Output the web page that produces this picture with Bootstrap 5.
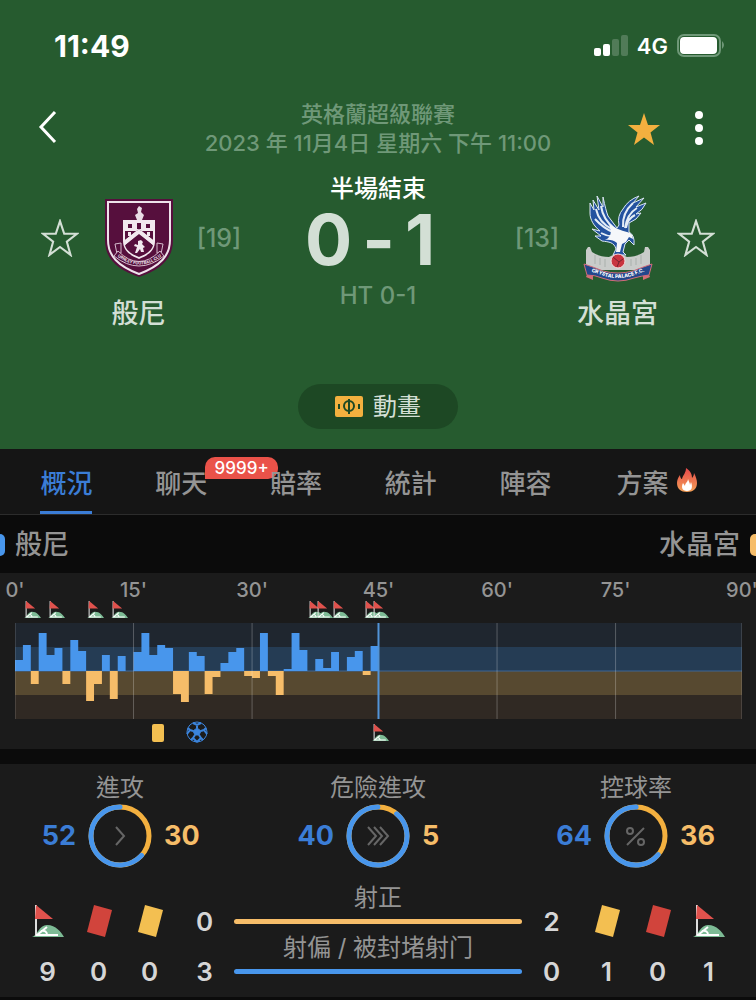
<!DOCTYPE html>
<html lang="zh-Hant">
<head>
<meta charset="utf-8">
<meta name="viewport" content="width=device-width, initial-scale=1">
<title>般尼 0 - 1 水晶宮</title>
<link href="https://cdn.jsdelivr.net/npm/bootstrap@5.3.0/dist/css/bootstrap.min.css" rel="stylesheet">
<style>
:root{--green:#265b2f;--blue:#4896ec;--blue-text:#3b7dd6;--gold:#f6bd69;--panel:#1b1b1b;--soft:#6f9878;--pale:#d3dfd5;--grey:#949494}
body{font-family:Inter,"Noto Sans CJK TC",sans-serif;background:#0b0b0b;color:var(--grey);overflow-x:hidden;font-weight:500}
svg{display:block}
.btn-plain{background:none;border:0;padding:0;color:inherit}
.match-head{background:var(--green);padding-bottom:20px}
.status-bar{height:100px;padding:29px 31px 0 54px;color:#fff}
.clock{font-size:30px;font-weight:700;line-height:34px}
.net{font-size:22px;font-weight:600;line-height:34px}
.top-row{padding:0 38px;height:72px}
.top-side{width:118px;padding-right:12px;gap:30px}
.league{font-size:22px;line-height:29px;color:var(--soft)}
.match-grid{display:grid;grid-template-columns:76px 81px 80px 1fr 80px 81px 76px;padding:0 22px}
.side-cell{height:88px;margin-top:22px;display:flex;align-items:center;justify-content:center}
.team-label{font-size:27px;line-height:34px;margin-top:15px;color:var(--pale);white-space:nowrap}
.rank{font-size:25px;color:var(--soft);padding-top:2px}
.phase{font-size:24px;line-height:34px;color:#fff}
.score{font-size:70px;line-height:68px;font-weight:700;color:var(--pale);gap:10px}
.half{font-size:24px;line-height:30px;margin-top:7px;color:var(--soft)}
.anim-btn{width:160px;height:45px;margin-top:53px;background:#1d4824;color:var(--pale);font-size:24px;border-radius:23px;gap:10px}
.tab-bar{background:#151515;border-bottom:1px solid #2c2c2c;height:66px;padding:0 24px 0 9px}
.tab-bar li{flex:10 1 0}
.tab-bar li:last-child{flex-grow:13}
.tab-bar a{color:var(--grey);text-decoration:none;font-size:26px;line-height:34px;height:65px;padding-top:18px;position:relative;z-index:1;display:inline-flex}
.tab-bar a.active{color:var(--blue-text);border-bottom:3px solid var(--blue-text)}
.chat-count{position:absolute;left:50px;top:8px;background:#ea5249;color:#fff;font-size:17px;line-height:22px;width:73px;text-align:center;border-radius:10px 10px 10px 0}
.team-row{height:58px;font-size:27px;overflow:hidden;padding-top:2px}
.team-row span{display:flex;align-items:center;gap:10px}
.home-name::before,.away-name::after{content:"";width:20px;height:22px;border-radius:5px;background:var(--blue);margin-left:-15px}
.away-name::after{background:var(--gold);margin:0 -14px 0 0}
.timeline{background:var(--panel);padding:0 14px 0 15px;height:176px;overflow:hidden}
.minutes{position:relative;height:28px;font-size:20px;line-height:34px}
.minutes span{position:absolute;transform:translateX(-50%)}
.events{position:relative;height:22px}
.events svg{position:absolute;top:0;margin-left:1px}
.below svg{top:5px}
.plot{width:100%;height:96px}
.stats{background:var(--panel);margin-top:15px;padding:10px 0 1px}
.rings{display:grid;grid-template-columns:20fr 23fr 20fr}
.ring-title{font-size:24px;line-height:28px;font-weight:400}
.ring-row{display:grid;grid-template-columns:1fr 64px 1fr;gap:12px;align-items:center;margin-top:2px;font-size:27px;font-weight:700;line-height:64px}
.txt-blue{color:var(--blue-text)}.txt-gold{color:var(--gold)}
.detail{margin-top:14px;padding:0 22px;font-size:26px;font-weight:600;color:#d6d6d6}
.counts{display:grid;grid-template-columns:repeat(3,51px) 59px;grid-auto-rows:50px;padding-top:14px;place-items:center}
.counts.away{grid-template-columns:59px repeat(3,51px)}
.bar-name{font-size:24px;line-height:32px;color:var(--grey);font-weight:400;white-space:nowrap}
.bar-line{height:5px;border-radius:3px;margin:5px 0 8px;background:var(--gold)}
.bar-line.home{background:var(--blue)}
</style>
<script src="https://cdn.jsdelivr.net/npm/bootstrap@5.3.0/dist/js/bootstrap.bundle.min.js"></script>
</head>
<body>
<svg width="0" height="0" class="position-absolute" aria-hidden="true">
  <symbol id="corner" viewBox="0 0 32 32">
    <path d="M0 32C5 31 7 20 15 20C24 20 29 27 32 32z" fill="#7dbb95"/>
    <path d="M4 0V31" stroke="#dedede" stroke-width="2"/>
    <path d="M4 0L21 14H3z" fill="#e0524d"/>
    <path d="M4 30H26M5 30L15 22M9 26C13 25 15 27 15 30" fill="none" stroke="#fff" stroke-width="2"/>
  </symbol>
  <symbol id="star" viewBox="0 0 36 36"><path d="M18 2L22 14H34L24.500 21.500L28 34L18 26.500L8 34L11.500 21.500L2 14H14z"/></symbol>
  <symbol id="red" viewBox="0 0 26 34"><path d="M8 1L26 6L19 33L1 28z" fill="#d1443c"/></symbol>
  <symbol id="yellow" viewBox="0 0 26 34"><path d="M8 1L26 6L19 33L1 28z" fill="#f3bf51"/></symbol>
</svg>

<header class="match-head">
  <div class="status-bar d-flex justify-content-between">
    <span class="clock">11:49</span>
    <div class="d-flex net">
      <svg width="35" height="34" class="me-2" fill="#fff"><rect x="0" y="19" width="7" height="8" rx="2"/><rect x="9" y="15" width="7" height="12" rx="2"/><rect x="18" y="10" width="7" height="17" rx="2" opacity=".2"/><rect x="27" y="6" width="7" height="21" rx="2" opacity=".2"/></svg>
      <span>4G</span>
      <svg width="49" height="34" class="ms-2"><rect x="2" y="6" width="42" height="21" rx="6" fill="none" stroke="#6f9878" stroke-width="2"/><rect x="4" y="8" width="37" height="17" rx="4" fill="#fff"/><path d="M46 12q4 4 0 8z" fill="#6f9878"/></svg>
    </div>
  </div>
  <div class="top-row d-flex justify-content-between align-items-start">
    <div class="top-side">
      <button class="btn-plain" aria-label="返回"><svg width="20" height="56" fill="none" stroke="#fff" stroke-width="3"><path d="M17 12L3 27L17 42"/></svg></button>
    </div>
    <div class="text-center league text-nowrap"><div>英格蘭超級聯賽</div><div>2023 年 11月4日 星期六 下午 11:00</div></div>
    <div class="top-side d-flex justify-content-end">
      <button class="btn-plain" aria-label="已收藏"><svg width="36" height="56" fill="#f3b03f"><use href="#star" y="11" width="36" height="36"/></svg></button>
      <button class="btn-plain" aria-label="更多"><svg width="14" height="56" fill="#fff"><circle cx="7" cy="15" r="4"/><circle cx="7" cy="28" r="4"/><circle cx="7" cy="41" r="4"/></svg></button>
    </div>
  </div>

  <div class="match-grid text-center">
    <div class="side-cell"><button class="btn-plain" aria-label="收藏般尼"><svg width="38" height="38" fill="none" stroke="#d3dfd5" stroke-width="2"><use href="#star" width="38" height="38"/></svg></button></div>
    <div class="d-flex flex-column align-items-center">
      <div class="side-cell">
        <svg width="70" height="80" viewBox="0 0 70 80">
          <path d="M1 1H69V42C69 60 58 71 35 79C12 71 1 60 1 42z" fill="#560f3d"/>
          <path d="M4 4H66V42C66 58 56 68 35 76C14 68 4 58 4 42z" fill="none" stroke="#eee3eb" stroke-width="2"/>
          <path d="M33 22L31 17L34 15L33 11L35 8L38 10L37 14L40 17L38 22z" fill="#e9dce5"/>
          <path d="M19 22H51V43C51 52 45 57 35 61C25 57 19 52 19 43z" fill="#f1e8ee"/>
          <path d="M21 33H49V34L49 42L35 31L21 42zM35 36L49 47C48 52 43 56 35 59C27 56 22 52 21 47z" fill="#560f3d"/>
          <path d="M21 47L35 35L49 47V42L35 31L21 42z" fill="#f1e8ee"/>
          <path d="M24 26h4v4h-4zM33 25h4v6h-4zM42 26h4v4h-4z" fill="#560f3d"/>
          <path d="M24 34h3v4h-3zM43 34h3v4h-3z" fill="#f1e8ee"/>
          <path d="M34 43l3-1 2 2-1 2 3 3-2 1 1 4h-3l-1-3-3 4h-2l2-6-3-1 1-2 3 1z" fill="#f1e8ee"/>
          <path d="M11 46l6-1v10l-4 1zM59 46l-6-1v10l4 1z" fill="#560f3d" stroke="#d5bccd"/>
          <path d="M14 53Q35 74 56 53L60 58Q35 78 10 58z" fill="#560f3d" stroke="#d5bccd"/>
          <path id="burnley-arc" d="M13 58Q35 75 58 58" fill="none"/>
          <text font-size="4" font-weight="700" fill="#f1e8ee"><textPath href="#burnley-arc" startOffset="50%" text-anchor="middle">BURNLEY FOOTBALL CLUB</textPath></text>
        </svg>
      </div>
      <div class="team-label">般尼</div>
    </div>
    <div class="side-cell rank">[19]</div>
    <div>
      <div class="phase">半場結束</div>
      <div class="score d-flex justify-content-center pe-3"><span>0</span><span>-</span><span>1</span></div>
      <div class="half">HT 0-1</div>
    </div>
    <div class="side-cell rank">[13]</div>
    <div class="d-flex flex-column align-items-center">
      <div class="side-cell">
        <svg width="70" height="88" viewBox="0 0 70 88">
          <path d="M3 56L5 53L7 53L9 58Q16 63 26 63Q35 57 44 63Q54 63 61 58L62 53L65 53L67 56V76H3z" fill="#c9ccca"/>
          <path d="M12 61V70M17 64V71M22 65V73M48 65V72M53 64V71M58 61V70" stroke="#a9b0ac"/>
          <path d="M33 55C31 48 26 48 19 47L12 42L18 42L9 35L17 37C11 32 7 26 7 19L7 9L11 16L10 6L16 16L14 2L20 13L20 3Q23 17 25 22L34 34L36 31Q34 22 40 15Q45 6 56 2L50 9L61 4L53 13L63 9Q60 16 53 20L58 19Q54 26 46 29L46 38Q52 41 51 51L46 46L42 50L40 58L43 61H30z" fill="#23529f" stroke="#dce7f4"/>
          <path d="M13 15Q16 29 29 35M18 12Q20 26 32 35M12 25Q20 34 30 38M18 39Q25 43 33 42M50 9Q39 19 40 33M54 14Q44 20 42 34M52 21Q44 25 43 34" fill="none" stroke="#e4edf6" stroke-width="2"/>
          <path d="M26 30Q35 36 44 38Q50 39 50 45L46 43L43 48L39 50L37 58H33L34 49Q29 45 22 46Q31 42 26 30z" fill="#f5f7fa"/>
          <circle cx="35" cy="67" r="7" fill="#c8343f" stroke="#f3dede"/>
          <path d="M30 63L36 68L40 65M36 68L34 73" fill="none" stroke="#76212e"/>
          <path d="M5 78L10 80V86L3 83zM65 78L60 80V86L67 83z" fill="#d46d76"/>
          <path d="M1 70Q13 74 20 77Q35 81 50 77Q57 74 69 70L66 81Q58 82 51 84Q35 90 19 84Q12 81 4 81z" fill="#23478c" stroke="#d16c7a"/>
          <path id="palace-arc" d="M3 77Q15 79 21 82Q35 86 49 82Q56 79 67 76" fill="none"/>
          <text font-size="5" font-weight="800" fill="#fff"><textPath href="#palace-arc" startOffset="50%" text-anchor="middle">CRYSTAL PALACE F.C.</textPath></text>
        </svg>
      </div>
      <div class="team-label">水晶宮</div>
    </div>
    <div class="side-cell"><button class="btn-plain" aria-label="收藏水晶宮"><svg width="38" height="38" fill="none" stroke="#d3dfd5" stroke-width="2"><use href="#star" width="38" height="38"/></svg></button></div>
  </div>

  <button class="btn-plain anim-btn d-flex align-items-center justify-content-center mx-auto">
    <svg width="28" height="21"><rect width="28" height="21" rx="2" fill="#f3b03f"/><g fill="none" stroke="#1d4824" stroke-width="2"><circle cx="14" cy="10" r="5"/><path d="M14 3V18M4 8V13M24 8V13"/></g></svg>
    <span>動畫</span>
  </button>
</header>

<nav class="tab-bar">
  <ul class="list-unstyled d-flex mb-0 text-center">
    <li><a href="#" class="active">概況</a></li>
    <li><a href="#">聊天<span class="chat-count">9999+</span></a></li>
    <li><a href="#">賠率</a></li>
    <li><a href="#">統計</a></li>
    <li><a href="#">陣容</a></li>
    <li><a href="#">方案<svg class="ms-2" width="22" height="26" viewBox="0 0 22 26"><defs><linearGradient id="flame" x2="0" y2="1"><stop stop-color="#e5484a"/><stop offset="1" stop-color="#f4a056"/></linearGradient></defs><path d="M10 1C15 4 16 8 16 11C17 10 18 8 18 6C20 10 21 13 21 16C21 22 17 25 11 25C5 25 1 22 1 16C1 13 2 11 4 8C4 10 5 12 6 12C7 8 10 6 10 1z" fill="url(#flame)"/><path d="M12 12C13 15 14 16 14 18L15 15C17 20 16 24 11 24C6 24 5 20 7 16L9 19C9 16 12 15 12 12z" fill="#fff"/></svg></a></li>
  </ul>
</nav>

<main>
  <div class="team-row d-flex justify-content-between"><span class="home-name">般尼</span><span class="away-name">水晶宮</span></div>

  <section class="timeline">
    <div class="minutes" id="minutes"></div>
    <div class="events" id="homeEvents"></div>
    <svg class="plot" viewBox="0 0 92 96" preserveAspectRatio="none">
      <rect width="92" height="24" fill="#1f262f"/><rect y="24" width="92" height="24" fill="#253c54"/>
      <rect y="48" width="92" height="24" fill="#574930"/><rect y="72" width="92" height="24" fill="#302923"/>
      <path d="M0 48H92" stroke="#3c6796" vector-effect="non-scaling-stroke"/>
      <path id="homeBars" fill="#4896ec"/><path id="awayBars" fill="#f6bd69"/>
      <path d="M0 0V96M15 0V96M30 0V96M61 0V96M76 0V96M92 0V96" stroke="#fff" stroke-opacity=".25" vector-effect="non-scaling-stroke"/>
      <path d="M46 0V96" stroke="#5294d8" stroke-width="2" vector-effect="non-scaling-stroke"/>
    </svg>
    <div class="events below" id="awayEvents">
      <svg width="12" height="18" style="left:18.7%"><rect width="12" height="18" rx="2" fill="#f3bf51"/></svg>
      <svg width="22" height="22" viewBox="0 0 22 22" style="left:23.4%;top:2px" fill="none" stroke="#3b84dc"><circle cx="11" cy="11" r="10"/><path d="M11 7L15 10L13 14H9L7 10z" fill="#3b84dc"/><path d="M11 7V4M15 10L18 9M13 14L15 17M9 14L7 17M7 10L4 9M7 2L11 4L15 2M20 7L18 9L21 13M17 19L15 17L11 21M5 19L7 17L11 21M2 7L4 9L1 13" stroke-width="2"/></svg>
    </div>
  </section>

  <section class="stats">
    <div class="rings text-center">
      <div>
        <div class="ring-title">進攻</div>
        <div class="ring-row"><span class="text-end txt-blue">52</span>
          <svg width="64" height="64" viewBox="0 0 64 64" fill="none" stroke-width="5"><circle cx="32" cy="32" r="29" stroke="#f3b03f"/><circle cx="32" cy="32" r="29" stroke="#4896ec" pathLength="82" stroke-dasharray="52 30" stroke-linecap="round" transform="rotate(42 32 32)"/><path d="M28 23L36 32L28 41" stroke="#666" stroke-width="2"/></svg>
          <span class="text-start txt-gold">30</span></div>
      </div>
      <div>
        <div class="ring-title">危險進攻</div>
        <div class="ring-row"><span class="text-end txt-blue">40</span>
          <svg width="64" height="64" viewBox="0 0 64 64" fill="none" stroke-width="5"><circle cx="32" cy="32" r="29" stroke="#f3b03f"/><circle cx="32" cy="32" r="29" stroke="#4896ec" pathLength="45" stroke-dasharray="40 5" stroke-linecap="round" transform="rotate(-50 32 32)"/><path d="M22 23L30 32L22 41M28 23L36 32L28 41M34 23L42 32L34 41" stroke="#666" stroke-width="2"/></svg>
          <span class="text-start txt-gold">5</span></div>
      </div>
      <div>
        <div class="ring-title">控球率</div>
        <div class="ring-row"><span class="text-end txt-blue">64</span>
          <svg width="64" height="64" viewBox="0 0 64 64" fill="none" stroke-width="5"><circle cx="32" cy="32" r="29" stroke="#f3b03f"/><circle cx="32" cy="32" r="29" stroke="#4896ec" pathLength="100" stroke-dasharray="64 36" stroke-linecap="round" transform="rotate(40 32 32)"/><g stroke="#666" stroke-width="2"><path d="M23 41L40 24"/><circle cx="26" cy="27" r="3"/><circle cx="37" cy="38" r="3"/></g></svg>
          <span class="text-start txt-gold">36</span></div>
      </div>
    </div>

    <div class="detail d-flex">
      <div class="counts">
        <svg width="32" height="34"><use href="#corner" y="1" width="32" height="32"/></svg>
        <svg width="26" height="34"><use href="#red"/></svg>
        <svg width="26" height="34"><use href="#yellow"/></svg>
        <span>0</span>
        <span>9</span><span>0</span><span>0</span><span>3</span>
      </div>
      <div class="flex-grow-1 text-center">
        <div class="bar-name">射正</div><div class="bar-line"></div>
        <div class="bar-name">射偏 / 被封堵射门</div><div class="bar-line home"></div>
      </div>
      <div class="counts away">
        <span>2</span>
        <svg width="26" height="34"><use href="#yellow"/></svg>
        <svg width="26" height="34"><use href="#red"/></svg>
        <svg width="32" height="34"><use href="#corner" y="1" width="32" height="32"/></svg>
        <span>0</span><span>1</span><span>0</span><span>1</span>
      </div>
    </div>
  </section>
</main>

<script>
// One slot per minute; each half has one slot of stoppage time, 92 in all.
const SLOTS = 92;
const pressure = [11,26,-13,38,16,23,-13,31,20,-30,-13,16,-28,15,0,19,38,16,26,23,-23,-31,19,15,-23,-6,8,19,23,-5,-7,38,-5,-24,2,38,21,0,12,3,19,0,14,20,-4,25];
const area = keep => pressure.map((v, i) => keep(v) ? `M${i} 48V${48 - v}H${i + 1}V48z` : '').join('');
document.getElementById('homeBars').setAttribute('d', area(v => v > 0));
document.getElementById('awayBars').setAttribute('d', area(v => v < 0));
const pct = slot => (slot / SLOTS * 100) + '%';
document.getElementById('minutes').innerHTML = [[0,0],[15,15],[30,30],[45,46],[60,61],[75,76],[90,92]]
  .map(([m, s]) => `<span style="left:${pct(s)}">${m}'</span>`).join('');
const flag = s => `<svg width="17" height="17" style="left:${pct(s)}"><use href="#corner" width="17" height="17"/></svg>`;
document.getElementById('homeEvents').innerHTML = [1,4,9,12,37,38,40,44,45].map(flag).join('');
document.getElementById('awayEvents').insertAdjacentHTML('beforeend', flag(45));
</script>
</body>
</html>
